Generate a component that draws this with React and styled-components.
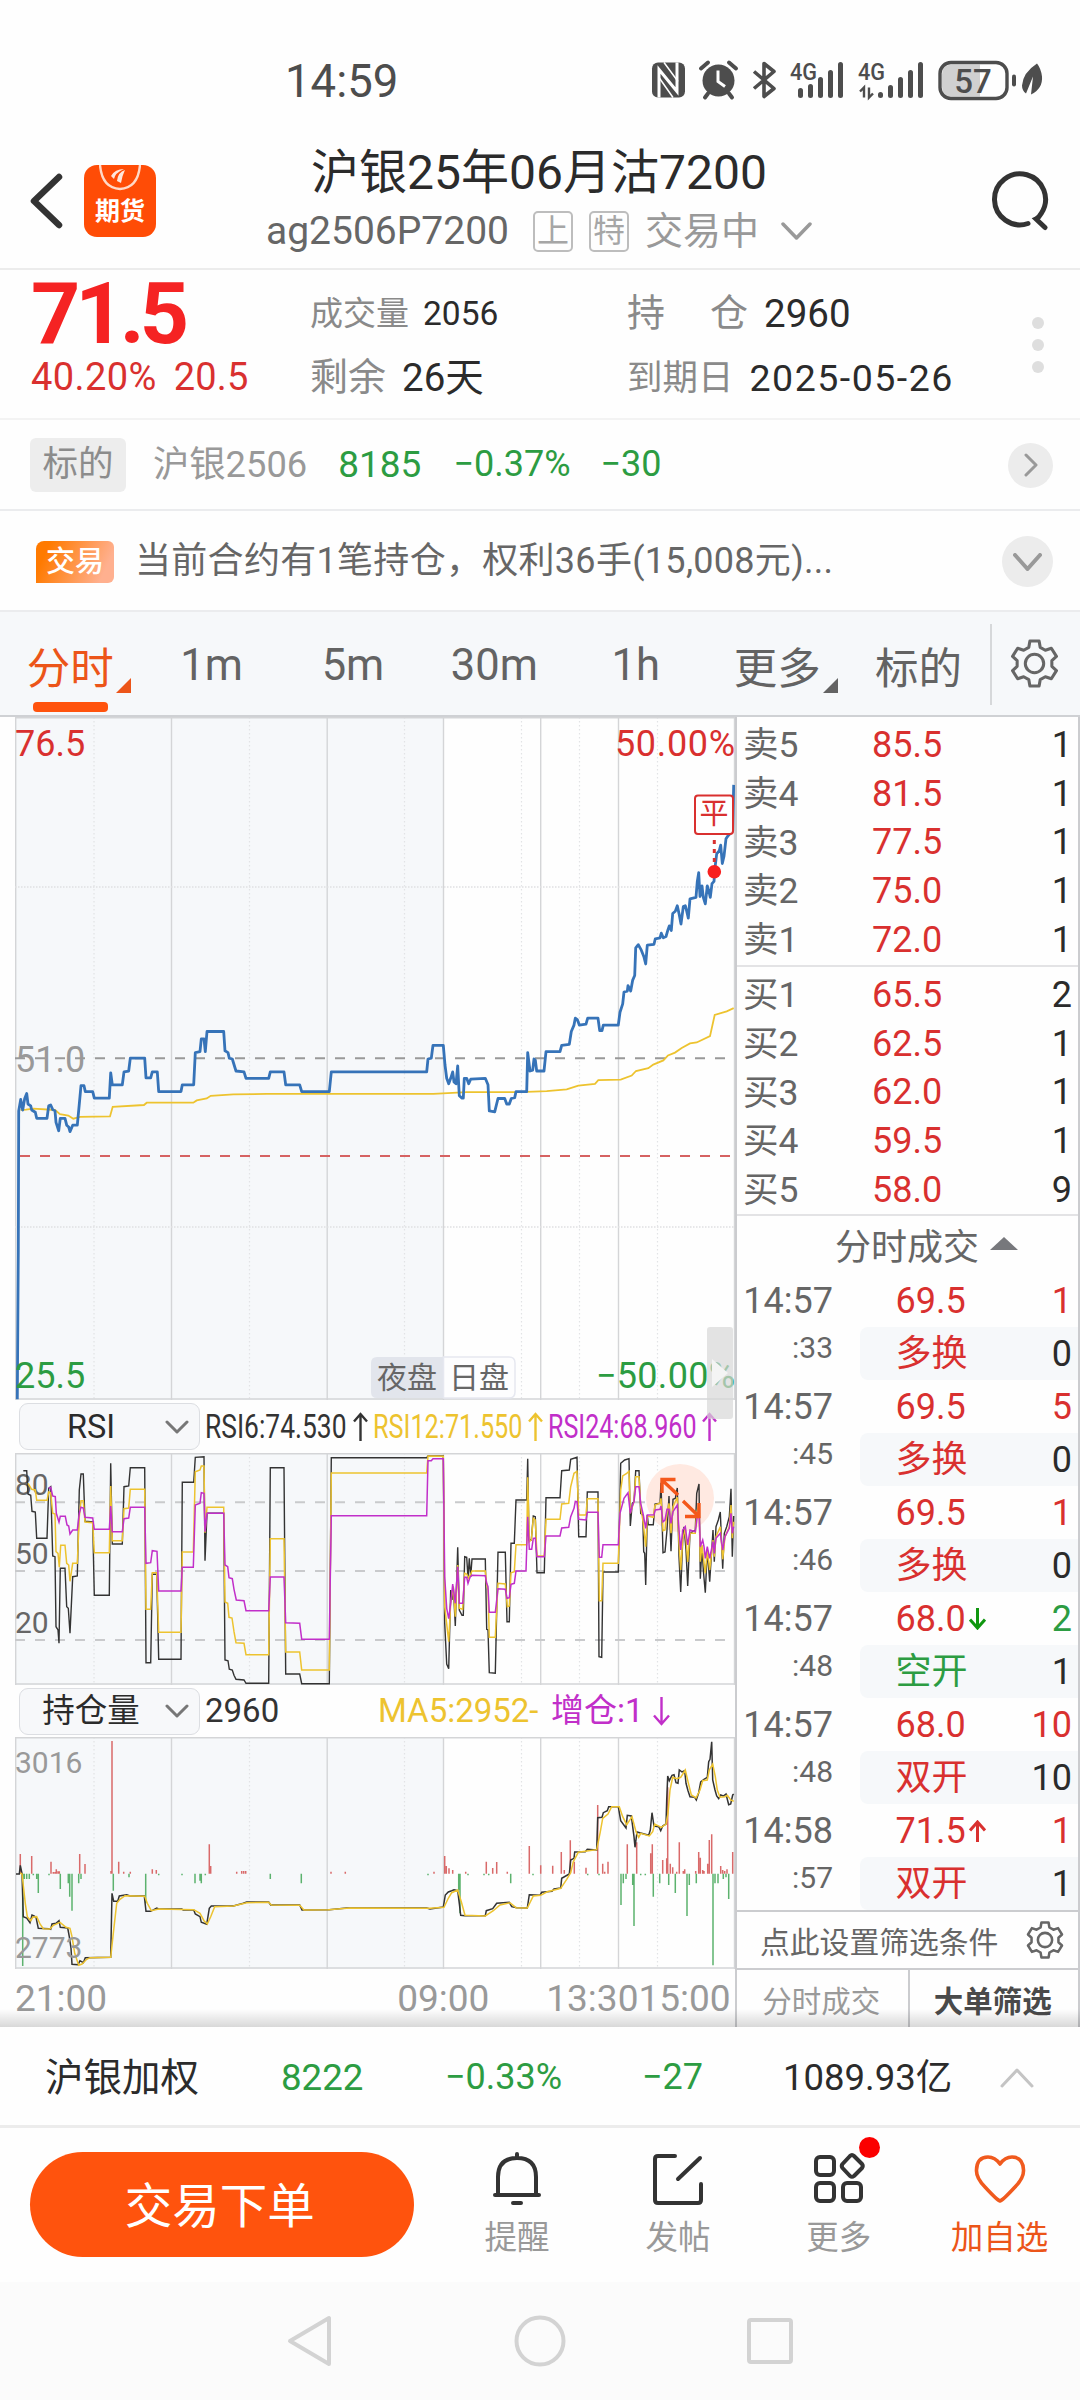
import React from "react";
import styled, { createGlobalStyle } from "styled-components";

const RED = "#d9302f";
const GREEN = "#2c9c42";
const ORANGE = "#ff530d";
const YELLOW = "#edc32f";
const PURPLE = "#c12fc9";
const GRID = "#d4d5d7";
const FONT = `Roboto, "Noto Sans CJK SC", sans-serif`;

const GlobalStyle = createGlobalStyle`
  * {
    box-sizing: border-box;
  }
  body {
    margin: 0;
    background: #fefefe;
    font-family: ${FONT};
    color: #2b2b2b;
  }
  svg {
    display: block;
    flex: none;
  }
`;

const Screen = styled.div`
  width: 1080px;
  height: 2400px;
  overflow: hidden;
  display: flex;
  flex-direction: column;
`;

const Text = styled.span`
  font-size: ${(p) => p.$size || 36}px;
  line-height: 1.2;
  color: ${(p) => p.$color || "inherit"};
  font-weight: ${(p) => p.$weight || 400};
  letter-spacing: ${(p) => p.$track || 0}px;
  margin-left: ${(p) => p.$left || 0}px;
  white-space: pre;
`;

/* status bar */
const StatusBar = styled.div`
  height: 130px;
  padding: 30px 36px 0 285px;
  display: flex;
  align-items: center;
  color: #4d4d4d;
`;
const Clock = styled.span`
  padding-top: 3px;
  font-size: 45.5px;
`;
const StatusIcons = styled.div`
  margin-left: auto;
`;

/* header */
const Header = styled.div`
  height: 140px;
  padding: 3px 29px 0 30px;
  display: flex;
  align-items: center;
  border-bottom: 2px solid #ececec;
`;
const TitleBlock = styled.div`
  flex: 1;
  display: flex;
  flex-direction: column;
  align-items: center;
  margin: 4px 0 0 -69px;
`;
const SubTitle = styled.div`
  display: flex;
  align-items: center;
  height: 60px;
`;
const SmallTag = styled.span`
  width: 40px;
  height: 41px;
  margin-left: ${(p) => p.$left}px;
  border: 2px solid #bdbdbd;
  border-radius: 5px;
  color: #a6a6a6;
  font-size: 32px;
  line-height: 36px;
  display: flex;
  justify-content: center;
`;
const AppLogo = styled.div`
  width: 72px;
  height: 72px;
  margin: 1px 0 0 21px;
  border-radius: 13px;
  background: #ff4c06;
  color: #fff;
  font-size: 25px;
  line-height: 34px;
  font-weight: 700;
  display: flex;
  flex-direction: column;
  align-items: center;
`;

/* quote */
const Quote = styled.div`
  height: 150px;
  display: flex;
  padding-left: 31px;
  border-bottom: 2px solid #f3f3f3;
`;
const QuoteCol = styled.div`
  width: ${(p) => p.$width}px;
  display: flex;
  flex-direction: column;
  padding-top: 12px;
`;
const QuoteLine = styled.div`
  height: 64px;
  display: flex;
  align-items: center;
`;
const LastPrice = styled.span`
  color: #f52323;
  font-size: 86px;
  font-weight: 700;
  line-height: 76px;
  letter-spacing: -5px;
`;
const Dots = styled.div`
  display: flex;
  flex-direction: column;
  gap: 10px;
  padding: 47px 0 0 81px;
`;
const Dot = styled.i`
  width: 12px;
  height: 12px;
  border-radius: 50%;
  background: #dedede;
`;

/* underlying and position rows */
const InfoRow = styled.div`
  height: ${(p) => p.$height}px;
  display: flex;
  align-items: center;
  padding: ${(p) => p.$top}px 27px 0 ${(p) => p.$pad}px;
  border-bottom: 2px solid #ebecee;
`;
const GrayTag = styled.span`
  width: 96px;
  height: 54px;
  border-radius: 6px;
  background: #ededed;
  color: #8c8c8c;
  font-size: 35.5px;
  line-height: 53px;
  text-align: center;
`;
const TradeTag = styled.span`
  width: 78px;
  height: 42px;
  border-radius: 8px 6px 6px 0;
  background: linear-gradient(115deg, #ff7a00 15%, #ffb08f 85%);
  color: #fff;
  font-size: 29px;
  font-weight: 500;
  line-height: 42px;
  text-align: center;
`;
const RoundButton = styled.span`
  width: ${(p) => p.$size}px;
  height: ${(p) => p.$size}px;
  margin-left: auto;
  border-radius: 50%;
  background: #ececec;
  display: flex;
  align-items: center;
  justify-content: center;
`;

/* period tabs */
const Tabs = styled.div`
  height: 105px;
  display: flex;
  background: #f6f8fa;
  border-bottom: 2px solid #cfd1d4;
`;
const Tab = styled.div`
  position: relative;
  width: 141.4px;
  display: flex;
  justify-content: center;
  align-items: center;
  font-size: 43.5px;
  padding: 3px 1px 0 0;
  color: ${(p) => (p.$active ? "#ec5519" : "#636363")};
`;
const Corner = styled.i`
  position: absolute;
  right: 10px;
  bottom: 22px;
  border-left: 15px solid transparent;
  border-bottom: 15px solid currentColor;
`;
const Underline = styled.i`
  position: absolute;
  left: 33px;
  bottom: 3px;
  width: 75px;
  height: 10px;
  border-radius: 4px;
  background: ${ORANGE};
`;
const TabGear = styled.div`
  flex: 1;
  display: flex;
  align-items: center;
  justify-content: center;
  padding-right: 2px;
`;
const TabRule = styled.i`
  width: 2px;
  height: 81px;
  margin-top: 12px;
  background: #d6d8da;
`;

/* chart and side panel */
const Main = styled.div`
  position: relative;
  height: 1310px;
  display: flex;
`;
const Charts = styled.div`
  width: 735px;
  padding-left: 15px;
  display: flex;
  flex-direction: column;
`;
const IndicatorBar = styled.div`
  height: ${(p) => p.$height}px;
  padding-left: 4px;
  display: flex;
  align-items: center;
`;
const Picker = styled.div`
  width: 181px;
  height: 47px;
  padding: 0 10px 0 0;
  border: 1.5px solid #dcdee2;
  border-radius: 9px;
  background: #f7f8fa;
  display: flex;
  align-items: center;
  justify-content: flex-end;
`;
const PickerLabel = styled.span`
  flex: 1;
  padding-right: 3px;
  text-align: center;
  font-size: 32.5px;
  line-height: 40px;
`;
const Reading = styled.div`
  width: ${(p) => p.$width}px;
  padding-left: 5px;
  display: flex;
  align-items: center;
  justify-content: space-between;
  color: ${(p) => p.$color};
  font-size: 33px;
  line-height: 40px;
  white-space: nowrap;
`;
const Narrow = styled.span`
  width: ${(p) => p.$width}px;
  transform: scaleX(${(p) => p.$ratio});
  transform-origin: left;
`;
const Axis = styled.div`
  display: flex;
  height: 58px;
  align-items: center;
  padding-top: 2px;
  color: #999;
  font-size: 37px;
`;
const Side = styled.div`
  width: 345px;
  border: solid #cbcccf;
  border-width: 0 2px 0 2px;
  display: flex;
  flex-direction: column;
`;
const Book = styled.div`
  height: ${(p) => p.$height}px;
  padding-top: 4px;
  border-bottom: 2px solid #e3e3e5;
`;
const BookRow = styled.div`
  height: 48.8px;
  padding: 0 6px 0 6px;
  display: grid;
  grid-template-columns: 129px 1fr auto;
  align-items: center;
  font-size: 36px;
  line-height: 44px;
`;
const TicksTitle = styled.div`
  height: 58px;
  display: flex;
  align-items: center;
  gap: 11px;
  padding: 0 0 3px 98px;
  color: #666;
  font-size: 36px;
`;
const Triangle = styled.i`
  border: 14px solid transparent;
  border-top: 0;
  border-bottom: 13px solid #77787c;
`;
const Tick = styled.div`
  height: 106px;
  display: grid;
  grid-template-columns: 96px 27px 1fr;
  grid-template-rows: 53px 53px;
  font-size: 36px;
`;
const TickTime = styled.span`
  color: #666;
  text-align: right;
  line-height: 54px;
  font-size: ${(p) => (p.$seconds ? 30 : 36)}px;
  margin-top: ${(p) => (p.$seconds ? -6 : 0)}px;
`;
const TickCell = styled.div`
  grid-column: 3;
  display: flex;
  align-items: center;
  padding: 1px 6px 0 35.5px;
  line-height: 50px;
  background: ${(p) => (p.$shade ? "#f6f8fa" : "none")};
  border-radius: 8px 0 0 8px;
  color: ${(p) => p.$color};
`;
const TickArrow = styled.span`
  margin-left: 3px;
`;
const Qty = styled.span`
  margin-left: auto;
  color: ${(p) => p.$color || "#2b2b2b"};
`;
const FilterRow = styled.div`
  height: 60px;
  border: solid #cbcccf;
  border-width: 2px 0;
  padding: 0 14px 0 23px;
  display: flex;
  align-items: center;
  justify-content: space-between;
  color: #666;
  font-size: 29.8px;
`;
const SideTabs = styled.div`
  flex: 1;
  display: flex;
`;
const SideTab = styled.div`
  width: 50%;
  display: flex;
  align-items: center;
  justify-content: center;
  font-size: 29.5px;
  padding: 0 2px 0 0;
  color: ${(p) => (p.$active ? "#4a4a4a" : "#9a9a9a")};
  font-weight: ${(p) => (p.$active ? 700 : 400)};

  & + & {
    border-left: 2px solid #cbcccf;
  }
`;
const Shade = styled.i`
  position: absolute;
  left: 0;
  right: 0;
  bottom: 0;
  height: 18px;
  background: linear-gradient(rgba(0, 0, 0, 0), rgba(0, 0, 0, 0.15));
`;
const SideHandle = styled.div`
  position: absolute;
  left: 707px;
  top: 610px;
  width: 26px;
  height: 92px;
  border-radius: 3px;
  background: rgba(215, 215, 215, 0.7);
  display: flex;
  align-items: center;
  justify-content: center;
`;
const Play = styled.i`
  border: 14px solid transparent;
  border-left: 16px solid #f4f4f4;
  border-right: 0;
`;

/* index row */
const IndexRow = styled.div`
  height: 101px;
  padding: 4px 46px 0 45px;
  display: grid;
  grid-template-columns: 236px 164px 197px 141px 1fr auto;
  align-items: center;
  border-bottom: 3px solid #ececec;
`;

/* actions */
const Actions = styled.div`
  height: 154px;
  display: flex;
  padding-left: 30px;
`;
const OrderButton = styled.button`
  width: 384px;
  height: 105px;
  margin: 24px 23px 0 0;
  padding: 0 4px 5px 0;
  border: 0;
  border-radius: 53px;
  background: ${ORANGE};
  color: #fff;
  font: 400 47.5px ${FONT};
`;
const Action = styled.div`
  position: relative;
  width: 161px;
  padding-top: 22px;
  display: flex;
  flex-direction: column;
  align-items: center;
  gap: 8px;
  font-size: 32.5px;
  line-height: 48px;
  color: ${(p) => (p.$active ? "#ec5519" : "#999")};
`;
const Badge = styled.i`
  position: absolute;
  left: 101px;
  top: 9px;
  width: 21px;
  height: 21px;
  border-radius: 50%;
  background: #fb0000;
`;

/* system navigation */
const SystemNav = styled.div`
  flex: 1;
  background: #fbfbfb;
  display: flex;
  justify-content: center;
  gap: 181px;
  padding: 33px 1px 0 0;
`;

function Chevron({ width, height, color, stroke = 3, dir = "down" }) {
  const d = {
    down: `M2 2 L${width / 2} ${height - 2} L${width - 2} 2`,
    up: `M2 ${height - 2} L${width / 2} 2 L${width - 2} ${height - 2}`,
    right: `M2 2 L${width - 2} ${height / 2} L2 ${height - 2}`,
    left: `M${width - 4} 4 L4 ${height / 2} L${width - 4} ${height - 4}`,
  }[dir];
  return (
    <svg width={width} height={height} fill="none" stroke={color} strokeWidth={stroke} strokeLinecap="round" strokeLinejoin="round">
      <path d={d} />
    </svg>
  );
}

function Gear({ size, stroke = 3.2 }) {
  return (
    <svg width={size} height={size} viewBox="0 0 48 48" fill="none" stroke="#666" strokeWidth={stroke} strokeLinejoin="round">
      <path d="M19.5 2 H28.5 L29.6 8.2 L34.6 11 L40.5 9 L45.5 17 L41 21.2 V26.8 L45.5 31 L40.5 39 L34.6 37 L29.6 39.8 L28.5 46 H19.5 L18.4 39.8 L13.4 37 L7.5 39 L2.5 31 L7 26.8 V21.2 L2.5 17 L7.5 9 L13.4 11 L18.4 8.2 Z" />
      <circle cx="24" cy="24" r="9" />
    </svg>
  );
}

function Arrow({ up, width = 15, height = 30, color = "currentColor", stroke = 2.4 }) {
  const m = width / 2;
  return (
    <svg width={width} height={height} fill="none" stroke={color} strokeWidth={stroke}>
      {up ? (
        <path d={`M${m} ${height} V2 M1 ${m + 2} L${m} 2 L${width - 1} ${m + 2}`} />
      ) : (
        <path d={`M${m} 0 V${height - 2} M1 ${height - m - 2} L${m} ${height - 2} L${width - 1} ${height - m - 2}`} />
      )}
    </svg>
  );
}

function StatusGlyphs() {
  const bars = (x, tops) =>
    tops.map((top, i) => <path key={i} d={`M${x + i * 10} ${top} V35`} stroke="#4d4d4d" strokeWidth="5" strokeLinecap="round" />);
  return (
    <svg width="394" height="42" viewBox="651 -1.5 394 42" fill="#4d4d4d">
      <rect x="653" y="2" width="33" height="35" rx="6" />
      <path d="M660 37 V9 L678 31 V2" fill="none" stroke="#fff" strokeWidth="3" />
      <path d="M665 2 L679 21 M660 17 L674 37" fill="none" stroke="#fff" strokeWidth="1.5" />
      <circle cx="719.5" cy="20" r="16" />
      <path d="M719 10 V21 L726 26" fill="none" stroke="#fff" strokeWidth="3" />
      <path d="M702 8 L709 2 M737 8 L730 2 M709 33 L706 37 M730 33 L733 37" stroke="#4d4d4d" strokeWidth="4" strokeLinecap="round" />
      <path d="M755 11 L775 28 L765 36 V3 L775 11 L755 28" fill="none" stroke="#4d4d4d" strokeWidth="3.6" strokeLinejoin="round" />
      <text x="791" y="19" fontSize="23" fontWeight="500" textLength="27" lengthAdjust="spacingAndGlyphs">4G</text>
      {bars(801.5, [30, 26, 19, 12, 4])}
      <text x="859" y="19" fontSize="23" fontWeight="500" textLength="27" lengthAdjust="spacingAndGlyphs">4G</text>
      <path d="M865 37 V27 L861 31 M870 27 V37 L874 33" fill="none" stroke="#4d4d4d" strokeWidth="2.4" />
      {bars(881.5, [34, 27, 19, 12, 4])}
      <path d="M953 4 H981 V36 H953 Q943 36 943 26 V14 Q943 4 953 4" fill="#d0d0d0" />
      <rect x="941" y="2" width="67" height="36" rx="11" fill="none" stroke="#4d4d4d" strokeWidth="3.4" />
      <text x="974" y="32" fontSize="33" fontWeight="500" textAnchor="middle">57</text>
      <rect x="1013" y="14" width="4" height="12" rx="2" />
      <path d="M1038 3 Q1024 12 1023 25 Q1023 30 1027 33 L1034 16 L1032 34 Q1044 28 1043 16 Q1042 8 1038 3" />
    </svg>
  );
}

const parse = (s) => s.trim().split(/\s+/).map((p) => p.split(",").map(Number));

/* Traces are kept in thirds of a pixel on x; y has its own step per pane. */
const toPath = (data, top, step) =>
  "M" + parse(data).map(([x, y]) => `${(x / 3).toFixed(1)} ${(top + y / step).toFixed(1)}`).join("L");

const PRICE = `52,1523 55,1200 56,895 62,870 68,893 74,868 80,857 84,880 92,884 95,893 106,898 110,911 141,911 146,884 152,882
158,892 165,895 168,920 176,938 181,911 195,911 200,926 206,930 210,940 218,926 232,926 238,880 243,840 252,840 256,853 278,853
283,867 328,867 332,812 337,838 367,838 372,810 386,808 391,780 434,780 438,823 452,823 457,810 472,810 476,853 543,853 547,838
581,838 586,768 600,766 604,738 612,738 616,766 621,722 671,722 675,764 684,768 688,780 697,782 708,808 732,810 738,824 806,824
811,810 852,810 857,838 899,838 905,853 988,853 994,810 1280,810 1284,782 1294,780 1299,752 1330,752 1335,795 1340,824 1346,836
1352,824 1358,810 1362,832 1368,836 1373,797 1378,862 1386,867 1390,867 1393,824 1400,824 1406,836 1412,826 1456,824 1464,838
1468,895 1484,897 1494,868 1514,868 1520,880 1528,880 1534,868 1544,866 1548,853 1580,853 1583,768 1590,808 1598,806 1602,782
1606,784 1610,808 1632,808 1638,766 1680,766 1685,752 1708,750 1714,722 1722,708 1726,693 1732,696 1738,708 1758,706 1763,693
1794,693 1799,720 1806,720 1810,708 1855,708 1860,680 1868,662 1872,636 1882,634 1884,622 1892,634 1898,610 1904,600 1907,540
1915,533 1924,545 1932,560 1937,575 1942,534 1962,532 1966,520 1980,518 1984,508 1990,518 1998,515 2004,500 2008,492 2014,502
2018,465 2026,460 2032,448 2038,468 2043,488 2050,450 2056,448 2060,460 2065,475 2070,433 2088,430 2092,395 2096,376 2100,428
2106,405 2110,430 2116,444 2122,405 2126,415 2131,430 2136,400 2142,395 2145,365 2150,335 2158,328 2162,316 2167,356 2172,340
2178,302 2185,295 2198,285 2201,185`;

const AVERAGE = `62,893 78,892 100,890 165,893 180,902 205,905 220,912 240,908 330,907 338,886 432,882 440,877 580,877 590,872
620,868 632,862 700,859 800,858 1300,858 1400,854 1560,854 1640,852 1700,848 1735,840 1785,836 1795,828 1862,827 1895,818
1908,808 1945,802 1960,794 1990,785 2004,774 2025,768 2045,758 2070,748 2090,746 2130,732 2144,686 2180,678 2201,671`;

const RSI6 = `70,242 80,242 84,312 92,316 96,364 106,366 110,445 141,445 146,295 152,290 158,498 165,500 168,710 174,720 177,760
181,535 195,535 200,650 205,655 210,730 218,560 232,558 238,300 243,252 250,252 255,394 278,396 283,616 328,616 332,220 337,462
367,462 372,290 386,288 391,233 434,233 438,818 452,818 457,553 470,553 476,808 543,808 547,277 581,277 586,202 612,200 615,512
621,370 671,370 675,810 684,812 688,838 697,840 702,856 708,868 732,870 738,880 806,880 811,233 852,233 857,852 899,852 905,881
988,881 994,203 1280,203 1284,198 1330,198 1334,700 1340,822 1346,836 1352,600 1356,630 1360,590 1366,708 1373,472 1378,660
1386,676 1390,676 1394,500 1400,502 1404,565 1408,505 1412,560 1416,507 1456,507 1460,718 1464,720 1468,848 1486,850 1494,487
1516,487 1521,695 1528,695 1533,460 1543,460 1548,330 1580,330 1583,206 1587,450 1594,450 1600,378 1606,380 1611,548 1633,548
1638,323 1680,323 1685,242 1708,240 1712,208 1731,202 1736,440 1758,440 1762,306 1794,306 1797,800 1805,802 1809,546 1855,546
1862,220 1874,210 1887,206 1891,408 1897,340 1902,335 1907,242 1917,242 1922,370 1928,375 1931,485 1934,490 1937,585 1942,375
1945,404 1960,404 1965,342 1980,340 1983,278 1989,488 1995,486 2001,420 2007,318 2013,484 2019,328 2026,325 2032,294 2037,500
2042,606 2048,450 2052,410 2058,480 2063,588 2070,430 2078,425 2086,420 2090,310 2097,282 2101,566 2106,470 2110,540 2116,608
2122,480 2129,575 2134,500 2139,420 2143,515 2148,410 2155,390 2161,366 2168,536 2173,430 2180,410 2188,380 2193,296 2197,500
2201,378`;

const RSI12 = `84,280 95,298 106,300 110,331 141,331 146,306 152,308 158,370 165,372 168,485 174,490 178,532 182,466 195,466
200,520 206,525 210,574 218,520 232,520 238,380 243,332 250,332 255,396 278,398 283,488 328,488 332,288 337,452 367,452 372,356
386,354 391,298 434,298 438,658 452,658 457,548 470,548 476,727 543,727 547,486 580,486 586,245 600,240 604,228 612,228 615,428
621,352 671,352 675,636 683,640 687,682 696,684 702,725 708,758 732,760 738,794 806,794 811,446 852,446 857,786 899,786 905,840
988,840 994,249 1280,249 1284,198 1330,199 1334,650 1346,755 1352,640 1360,590 1366,680 1373,525 1378,655 1388,658 1394,550
1400,552 1406,565 1412,552 1416,543 1456,543 1460,585 1464,600 1468,742 1486,742 1494,580 1516,582 1522,650 1528,648 1533,548
1543,545 1548,464 1580,464 1583,262 1588,455 1594,450 1600,385 1606,390 1611,498 1633,498 1638,388 1680,388 1685,342 1706,340
1712,290 1722,250 1731,244 1736,375 1758,375 1762,326 1794,326 1798,632 1805,632 1809,520 1855,520 1862,300 1868,258 1880,250
1887,244 1891,370 1902,335 1907,260 1917,260 1922,350 1930,400 1937,470 1942,378 1960,382 1965,345 1980,340 1983,325 1989,422
1995,420 2001,370 2007,340 2013,430 2019,350 2032,322 2037,460 2042,540 2048,450 2056,415 2063,516 2070,430 2086,430 2090,370
2097,340 2101,515 2106,465 2110,500 2116,550 2122,480 2129,540 2139,450 2143,500 2148,440 2161,410 2168,508 2175,440 2188,410
2193,345 2197,445 2201,395`;

const RSI24 = `146,295 152,292 158,318 166,320 169,370 177,396 181,379 196,379 201,405 206,408 210,432 218,420 232,420 238,370
243,352 250,354 255,382 278,384 283,418 328,418 332,348 337,425 367,425 372,386 386,384 391,352 434,352 438,520 452,518 457,482
471,484 476,603 543,603 547,532 580,532 586,345 600,340 604,308 612,310 615,425 621,370 671,370 675,525 683,530 687,563 697,566
702,598 709,630 732,632 738,662 806,662 811,561 852,561 857,698 899,700 905,748 988,748 994,377 1280,377 1284,212 1294,212
1299,206 1330,206 1334,560 1340,655 1346,686 1352,640 1358,582 1366,640 1373,530 1378,640 1388,640 1394,562 1400,562 1404,580
1410,562 1416,556 1456,557 1460,580 1464,590 1468,667 1486,667 1494,596 1516,598 1521,625 1528,623 1533,583 1543,580 1548,543
1578,543 1583,380 1588,478 1595,478 1600,445 1606,444 1611,500 1633,500 1638,438 1680,438 1685,414 1706,412 1712,380 1722,355
1726,334 1731,335 1736,388 1758,390 1762,367 1794,367 1798,502 1805,502 1809,464 1855,464 1860,370 1872,325 1884,308 1891,370
1897,348 1902,335 1907,290 1917,290 1922,340 1930,375 1937,415 1942,375 1962,374 1966,360 1980,358 1983,348 1989,395 1995,390
2001,358 2007,358 2013,400 2019,365 2032,345 2037,420 2042,480 2048,420 2056,410 2063,465 2070,420 2086,425 2092,380 2097,350
2101,470 2108,450 2112,470 2116,505 2122,470 2129,505 2139,455 2143,490 2148,445 2161,430 2168,480 2175,440 2188,415 2193,370
2197,430 2201,410`;

const HOLD = `48,552 58,552 61,526 66,550 70,680 80,684 90,698 96,675 102,678 108,682 115,715 146,716 152,718 156,702 168,700
177,692 181,712 203,714 208,740 213,775 216,823 234,824 240,812 250,818 256,803 332,802 336,610 341,634 353,634 358,618 380,614
390,618 433,618 438,664 452,664 470,654 476,657 545,657 550,660 581,660 586,672 600,680 604,697 620,703 628,655 634,648 700,648
730,640 740,636 806,636 812,645 899,645 906,660 988,659 1040,654 1280,654 1290,657 1330,651 1336,615 1345,606 1355,602 1362,599
1373,602 1378,640 1382,676 1395,677 1456,677 1459,662 1478,656 1490,640 1528,637 1535,650 1550,653 1582,654 1588,614 1620,616
1625,607 1656,604 1662,597 1682,594 1685,565 1708,552 1712,510 1722,505 1724,486 1756,485 1762,478 1790,480 1793,383 1806,382
1810,368 1822,362 1826,350 1855,350 1862,392 1878,414 1882,376 1894,378 1902,440 1905,472 1911,426 1946,436 1951,420 1956,368
1962,408 1976,410 1982,422 1988,408 1998,402 2000,330 2003,258 2008,272 2016,256 2022,254 2028,278 2034,280 2038,240 2046,246
2054,242 2058,280 2064,302 2070,320 2084,322 2089,330 2096,308 2102,276 2112,268 2122,262 2126,215 2130,208 2135,155 2138,270
2145,300 2150,318 2156,326 2162,315 2170,318 2178,312 2186,344 2192,342 2198,315 2201,312`;

const HOLD_MA = `61,549 66,552 76,640 82,680 92,692 98,682 110,680 120,702 130,716 150,717 160,706 180,697 198,712 210,715
216,740 224,790 236,826 246,822 260,808 270,803 332,802 340,730 350,640 360,628 375,617 434,619 442,640 454,662 476,657 581,659
600,670 612,692 622,702 632,680 644,650 700,648 740,638 806,637 814,645 899,646 912,660 985,659 1050,654 1290,655 1332,652
1345,625 1355,608 1373,600 1384,635 1395,676 1456,678 1480,662 1500,645 1530,638 1548,653 1582,654 1600,618 1622,616 1640,606
1682,595 1700,568 1712,548 1720,515 1735,487 1790,479 1800,430 1808,385 1824,372 1835,350 1858,350 1868,380 1880,404 1896,380
1908,425 1916,442 1922,430 1948,438 1958,425 1964,402 1984,412 1998,402 2004,370 2010,300 2018,262 2030,266 2042,262 2056,240
2064,275 2074,315 2088,324 2100,300 2108,272 2122,270 2128,240 2138,222 2146,260 2152,300 2160,322 2175,320 2182,316 2192,330
2201,334`;

const UP_BARS = `61,492 95,498 153,515 160,546 165,546 169,538 174,544 178,544 239,492 255,522 333,543 336,153 356,515 371,545
391,545 457,538 469,540 628,463 632,528 710,545 725,543 731,543 737,543 993,545 1036,545 1302,545 1334,498 1339,528 1347,535
1358,540 1397,545 1459,515 1478,534 1490,516 1522,545 1588,468 1622,526 1658,527 1684,486 1693,540 1711,451 1723,515 1758,533
1793,345 1808,521 1814,545 1824,515 1882,463 1910,457 1952,490 1957,463 1988,510 2000,505 2003,292 2011,521 2018,532 2030,545
2038,457 2050,543 2054,538 2087,543 2096,486 2101,503 2108,540 2112,543 2123,521 2128,450 2135,433 2162,528 2168,540 2174,543
2181,538 2198,486`;

const DOWN_BARS = `68,828 73,567 80,567 88,567 100,556 110,567 115,609 147,556 181,597 205,580 209,620 216,662 236,580 243,567
340,602 387,562 437,640 476,556 546,556 585,580 600,572 604,580 616,556 811,567 904,580 1284,556 1376,600 1380,670 1404,556
1452,556 1466,556 1532,580 1599,556 1763,556 1797,556 1863,645 1870,580 1878,567 1898,585 1902,708 1922,556 1936,556 1960,620
1979,580 2006,585 2026,609 2061,678 2068,585 2089,580 2139,826 2145,580 2154,580 2170,567 2178,562 2186,627`;

const bars = (data) => parse(data).map(([x, y]) => `M${(x / 3).toFixed(1)} ${1690 + 551 / 3}V${(1690 + y / 3).toFixed(1)}`).join("");

/* Session background, frame and time lines shared by the three panes. */
function Pane({ top, bottom, children }) {
  return (
    <svg width="720" height={bottom - top} viewBox={`15 ${top} 720 ${bottom - top}`} fill="none" fontFamily={FONT}>
      <rect x="15" y={top} width="428.5" height={bottom - top} fill="#f6f8fa" />
      {[94, 249.5, 404.5, 521.5, 579.5, 657.5].map((x) => (
        <path key={x} d={`M${x} ${top}V${bottom}`} stroke="#e2e3e5" strokeWidth="1.2" strokeDasharray="1.5 2.5" />
      ))}
      {[15.7, 171.5, 327.2, 443.5, 540.7, 618.5, 734.5].map((x) => (
        <path key={x} d={`M${x} ${top}V${bottom}`} stroke={GRID} strokeWidth="1.4" />
      ))}
      <path d={`M15 ${top + 0.8}H735M15 ${bottom - 1}H735`} stroke={GRID} strokeWidth="1.6" />
      {children}
    </svg>
  );
}

function PriceChart() {
  return (
    <Pane top={717} bottom={1400}>
      <path d="M15 887H735M15 1227H735" stroke="#dfe0e2" strokeWidth="1.4" strokeDasharray="1.5 1.5" />
      <path d="M15 1058.3H725" stroke="#999" strokeWidth="2" strokeDasharray="10 10" />
      <path d="M20 1156H733" stroke="#d66262" strokeWidth="2" strokeDasharray="10 10" />
      <path d={toPath(AVERAGE, 700, 2.178)} stroke={YELLOW} strokeWidth="1.8" />
      <path d={toPath(PRICE, 700, 2.178)} stroke="#3673b8" strokeWidth="2.8" strokeLinejoin="round" />
      <g fontSize="36">
        <text x="15" y="756" fill={RED}>76.5</text>
        <text x="735" y="756" fill={RED} textAnchor="end" textLength="120">50.00%</text>
        <text x="15" y="1072" fill="#999">51.0</text>
        <text x="15" y="1388" fill={GREEN}>25.5</text>
        <text x="735" y="1388" fill={GREEN} textAnchor="end" textLength="139">−50.00%</text>
      </g>
      <rect x="695" y="795.5" width="38" height="38.5" rx="3" fill="#fff" stroke={RED} strokeWidth="2" />
      <text x="714" y="824" fontSize="29" fill={RED} textAnchor="middle">平</text>
      <path d="M714.3 840V866" stroke={RED} strokeWidth="3" strokeDasharray="4 5" />
      <circle cx="714.3" cy="871.8" r="6.8" fill="#f8201f" />
      <path d="M443.5 1357H377Q371 1357 371 1363V1392Q371 1398 377 1398H443.5Z" fill="#e2e5ec" />
      <path d="M443.5 1357H509Q515 1357 515 1363V1392Q515 1398 509 1398H443.5Z" fill="#fdfdfe" stroke="#e6e8f0" strokeWidth="1.5" />
      <text x="407" y="1388" fontSize="30" fill="#666" textAnchor="middle">夜盘</text>
      <text x="479" y="1388" fontSize="30" fill="#666" textAnchor="middle">日盘</text>
    </Pane>
  );
}

function RsiChart() {
  return (
    <Pane top={1453} bottom={1685}>
      <path d="M15 1502.3H735M15 1571H735M15 1640H735" stroke="#c9cacc" strokeWidth="2" strokeDasharray="10 10" />
      <g fontSize="30" fill="#666">
        <text x="15" y="1494.5">80</text>
        <text x="15" y="1563.5">50</text>
        <text x="15" y="1632.5">20</text>
      </g>
      <circle cx="680" cy="1498" r="34" fill="#ffe9e1" />
      <path d={toPath(RSI6, 1390, 3)} stroke="#333" strokeWidth="1.4" />
      <path d={toPath(RSI12, 1390, 3)} stroke={YELLOW} strokeWidth="1.5" />
      <path d={toPath(RSI24, 1390, 3)} stroke={PURPLE} strokeWidth="1.5" />
      <path d="M678 1495L662 1480M662 1493V1479.5H675.5M683 1501L698.5 1516M699 1503V1516.5H685" stroke="#f4581b" strokeWidth="3.4" />
    </Pane>
  );
}

function HoldChart() {
  return (
    <Pane top={1737} bottom={1969}>
      <path d={bars(UP_BARS)} stroke="#d96a6a" strokeWidth="1.5" />
      <path d={bars(DOWN_BARS)} stroke="#5cb26e" strokeWidth="1.5" />
      <path d={toPath(HOLD, 1690, 3)} stroke="#333" strokeWidth="1.5" />
      <path d={toPath(HOLD_MA, 1690, 3)} stroke={YELLOW} strokeWidth="1.5" />
      <g fontSize="30" fill="#999">
        <text x="15" y="1773">3016</text>
        <text x="15" y="1958">2773</text>
      </g>
    </Pane>
  );
}

const asks = [["卖5", "85.5", 1], ["卖4", "81.5", 1], ["卖3", "77.5", 1], ["卖2", "75.0", 1], ["卖1", "72.0", 1]];
const bids = [["买1", "65.5", 2], ["买2", "62.5", 1], ["买3", "62.0", 1], ["买4", "59.5", 1], ["买5", "58.0", 9]];

const ticks = [
  { time: "14:57", sec: ":33", price: "69.5", vol: 1, kind: "多换", delta: 0 },
  { time: "14:57", sec: ":45", price: "69.5", vol: 5, kind: "多换", delta: 0 },
  { time: "14:57", sec: ":46", price: "69.5", vol: 1, kind: "多换", delta: 0 },
  { time: "14:57", sec: ":48", price: "68.0", vol: 2, kind: "空开", delta: 1, arrow: "down", green: true },
  { time: "14:57", sec: ":48", price: "68.0", vol: 10, kind: "双开", delta: 10 },
  { time: "14:58", sec: ":57", price: "71.5", vol: 1, kind: "双开", delta: 1, arrow: "up" },
];

function BookRows({ rows }) {
  return rows.map(([label, price, qty]) => (
    <BookRow key={label}>
      <Text $color="#666" $size={35.5}>{label}</Text>
      <Text $color={RED}>{price}</Text>
      <Text>{qty}</Text>
    </BookRow>
  ));
}

function SidePanel() {
  return (
    <Side>
      <Book $height={250}><BookRows rows={asks} /></Book>
      <Book $height={249}><BookRows rows={bids} /></Book>
      <TicksTitle>分时成交<Triangle /></TicksTitle>
      {ticks.map((t, i) => (
        <Tick key={i}>
          <TickTime>{t.time}</TickTime>
          <TickCell $color={RED}>
            {t.price}
            {t.arrow && (
              <TickArrow>
                <Arrow up={t.arrow === "up"} width={17} height={22} stroke={3} color={t.green ? "#0f960f" : RED} />
              </TickArrow>
            )}
            <Qty $color={t.green ? GREEN : RED}>{t.vol}</Qty>
          </TickCell>
          <TickTime $seconds>{t.sec}</TickTime>
          <TickCell $shade $color={t.green ? GREEN : RED}>
            {t.kind}
            <Qty>{t.delta}</Qty>
          </TickCell>
        </Tick>
      ))}
      <FilterRow>点此设置筛选条件<Gear size={38} /></FilterRow>
      <SideTabs>
        <SideTab>分时成交</SideTab>
        <SideTab $active>大单筛选</SideTab>
      </SideTabs>
    </Side>
  );
}

function ActionIcon({ name }) {
  const dark = { fill: "none", stroke: "#333", strokeWidth: 4, strokeLinecap: "round", strokeLinejoin: "round" };
  if (name === "bell")
    return (
      <svg width="54" height="56" {...dark}>
        <path d="M27 4V8M8 45V27Q8 8 27 8Q46 8 46 27V45M5 45H49M23 53H31" />
      </svg>
    );
  if (name === "post")
    return (
      <svg width="54" height="56" {...dark}>
        <path d="M24 6H7Q4 6 4 9V50Q4 53 7 53H47Q50 53 50 50V34M49 8L27 29" />
      </svg>
    );
  if (name === "more")
    return (
      <svg width="54" height="56" {...dark}>
        <rect x="4" y="7" width="18" height="18" rx="4" />
        <rect x="4" y="33" width="18" height="18" rx="4" />
        <rect x="31" y="33" width="18" height="18" rx="4" />
        <path d="M38 6L30.5 14Q29 16 30.5 18L38 26Q40 27.5 42 26L50 18Q51.5 16 50 14L42 6Q40 4 38 6Z" />
      </svg>
    );
  return (
    <svg width="54" height="56" {...dark} stroke="#f05a1e" strokeWidth="3.6">
      <path d="M27 51Q24 50 12 37Q3 28 3.5 20Q4 7 15 7Q22 7 27 14Q32 7 39 7Q50 7 50.5 20Q51 28 42 37Q30 50 27 51Z" />
    </svg>
  );
}

function App() {
  return (
    <Screen>
      <GlobalStyle />
      <StatusBar>
        <Clock>14:59</Clock>
        <StatusIcons><StatusGlyphs /></StatusIcons>
      </StatusBar>

      <Header>
        <Chevron width={33} height={56} color="#333" stroke={6.5} dir="left" />
        <AppLogo>
          <svg width="42" height="30" fill="none" stroke="#ffd9c8" strokeWidth="2.4">
            <path d="M1 0Q3 23 21 24Q39 23 41 0" />
            <path d="M12 11Q16 4 25 4Q16 8 15 14ZM18 16Q19 7 26 5Q23 11 22 18Z" fill="#ffe6db" stroke="none" />
          </svg>
          期货
        </AppLogo>
        <TitleBlock>
          <Text $size={48}>沪银25年06月沽7200</Text>
          <SubTitle>
            <Text $size={39} $color="#666">ag2506P7200</Text>
            <SmallTag $left={24}>上</SmallTag>
            <SmallTag $left={16}>特</SmallTag>
            <Text $size={38} $color="#999" $left={16}>交易中</Text>
            <Text $left={22}><Chevron width={31} height={18} color="#999" stroke={3.5} /></Text>
          </SubTitle>
        </TitleBlock>
        <svg width="60" height="60" fill="none" stroke="#333" strokeWidth="5" strokeLinecap="round">
          <path d="M37 52.5A25.5 25.5 0 1 1 50.5 42Q48 46.5 45 48L54 56.5" />
        </svg>
      </Header>

      <Quote>
        <QuoteCol $width={279}>
          <QuoteLine><LastPrice>71.5</LastPrice></QuoteLine>
          <QuoteLine>
            <Text $size={38} $color={RED} $track={0.4}>40.20%</Text>
            <Text $size={38} $color={RED} $left={17} $track={0.2}>20.5</Text>
          </QuoteLine>
        </QuoteCol>
        <QuoteCol $width={317}>
          <QuoteLine><Text $size={33} $color="#8a8a8a">成交量</Text><Text $size={33.5} $left={14}>2056</Text></QuoteLine>
          <QuoteLine><Text $size={38} $color="#8a8a8a">剩余</Text><Text $size={38.5} $left={16}>26天</Text></QuoteLine>
        </QuoteCol>
        <QuoteCol $width={324}>
          <QuoteLine>
            <Text $size={38} $color="#8a8a8a">持</Text>
            <Text $size={38} $color="#8a8a8a" $left={45}>仓</Text>
            <Text $size={38.5} $left={16}>2960</Text>
          </QuoteLine>
          <QuoteLine><Text $size={35.5} $color="#8a8a8a">到期日</Text><Text $size={37.5} $track={1.5} $left={16}>2025-05-26</Text></QuoteLine>
        </QuoteCol>
        <Dots><Dot /><Dot /><Dot /></Dots>
      </Quote>

      <InfoRow $height={91} $pad={30} $top={1}>
        <GrayTag>标的</GrayTag>
        <Text $size={36.3} $color="#999" $left={27}>沪银2506</Text>
        <Text $size={37} $color={GREEN} $left={31}>8185</Text>
        <Text $color={GREEN} $left={32}>−0.37%</Text>
        <Text $color={GREEN} $left={30}>−30</Text>
        <RoundButton $size={45}><Chevron width={14} height={24} color="#999" dir="right" /></RoundButton>
      </InfoRow>
      <InfoRow $height={101} $pad={36} $top={2}>
        <TradeTag>交易</TradeTag>
        <Text $color="#666" $left={21} $track={0.3}>当前合约有1笔持仓，权利36手(15,008元)...</Text>
        <RoundButton $size={51}><Chevron width={29} height={18} color="#999" stroke={4} /></RoundButton>
      </InfoRow>

      <Tabs>
        <Tab $active>分时<Corner /><Underline /></Tab>
        <Tab>1m</Tab>
        <Tab>5m</Tab>
        <Tab>30m</Tab>
        <Tab>1h</Tab>
        <Tab>更多<Corner /></Tab>
        <Tab>标的</Tab>
        <TabRule />
        <TabGear><Gear size={49} stroke={3} /></TabGear>
      </Tabs>

      <Main>
        <Charts>
          <PriceChart />
          <IndicatorBar $height={53}>
            <Picker><PickerLabel>RSI</PickerLabel><Chevron width={24} height={14} color="#777" /></Picker>
            <Reading $width={168} $color="#333"><Narrow $width={142} $ratio={0.8}>RSI6:74.530</Narrow><Arrow up height={29} /></Reading>
            <Reading $width={175} $color={YELLOW}><Narrow $width={148} $ratio={0.765}>RSI12:71.550</Narrow><Arrow up height={29} /></Reading>
            <Reading $width={174} $color={PURPLE}><Narrow $width={147} $ratio={0.76}>RSI24:68.960</Narrow><Arrow up height={29} /></Reading>
          </IndicatorBar>
          <RsiChart />
          <IndicatorBar $height={52}>
            <Picker><PickerLabel>持仓量</PickerLabel><Chevron width={24} height={14} color="#777" /></Picker>
            <Reading $width={173} $color="#333">2960</Reading>
            <Reading $width={173} $color={YELLOW}>MA5:2952-</Reading>
            <Reading $width={124} $color={PURPLE}>增仓:1<Arrow width={17} height={29} /></Reading>
          </IndicatorBar>
          <HoldChart />
          <Axis>
            <Text $size={37}>21:00</Text>
            <Text $size={37} $left={290}>09:00</Text>
            <Text $size={37} $left={57}>13:30</Text>
            <Text $size={37}>15:00</Text>
          </Axis>
        </Charts>
        <SideHandle><Play /></SideHandle>
        <SidePanel />
        <Shade />
      </Main>

      <IndexRow>
        <Text $size={38.5}>沪银加权</Text>
        <Text $size={36.7} $color={GREEN}>8222</Text>
        <Text $color={GREEN}>−0.33%</Text>
        <Text $color={GREEN}>−27</Text>
        <Text $size={36.5}>1089.93亿</Text>
        <Chevron width={34} height={20} color="#c4c4c4" dir="up" />
      </IndexRow>

      <Actions>
        <OrderButton>交易下单</OrderButton>
        <Action><ActionIcon name="bell" />提醒</Action>
        <Action><ActionIcon name="post" />发帖</Action>
        <Action><ActionIcon name="more" /><Badge />更多</Action>
        <Action $active><ActionIcon name="heart" />加自选</Action>
      </Actions>

      <SystemNav>
        <svg width="46" height="52" fill="none" stroke="#d3d3d3" strokeWidth="4" strokeLinejoin="round"><path d="M42 3V49L3 26Z" /></svg>
        <svg width="52" height="52" fill="none" stroke="#d3d3d3" strokeWidth="4"><circle cx="26" cy="26" r="23.5" /></svg>
        <svg width="46" height="52" fill="none" stroke="#d3d3d3" strokeWidth="4"><rect x="2" y="5" width="42" height="42" rx="2" /></svg>
      </SystemNav>
    </Screen>
  );
}

export default App;
